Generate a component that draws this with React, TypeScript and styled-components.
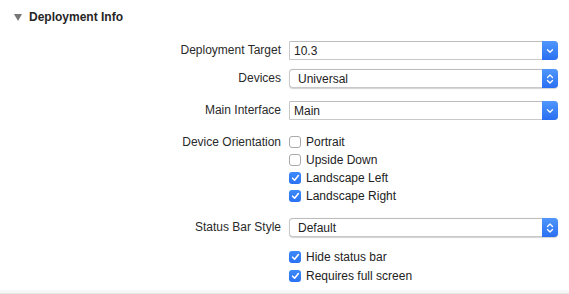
import React from "react";
import styled, { createGlobalStyle } from "styled-components";

const Global = createGlobalStyle`
  html, body { margin: 0; padding: 0; background: #ffffff; }
  body { font-family: "Liberation Sans", Arial, sans-serif; color: #262626; }
`;

const Page = styled.div`
  width: 569px;
  height: 294px;
  box-sizing: border-box;
  border-bottom: 1px solid #e6e6e6;
  position: relative;
  overflow: hidden;
  &::after {
    content: "";
    position: absolute;
    left: 0;
    right: 0;
    bottom: 0;
    height: 3px;
    background: #f7f7f7;
  }
`;

const Header = styled.div`
  height: 34px;
  display: flex;
  align-items: center;
  padding-left: 14px;
  gap: 7px;
`;

const Disclosure = styled.span`
  width: 0;
  height: 0;
  border-left: 4px solid transparent;
  border-right: 4px solid transparent;
  border-top: 7px solid #767676;
  margin-top: 1px;
`;

const Title = styled.span`
  font-weight: bold;
  font-size: 12px;
  color: #262626;
`;

const Form = styled.div`
  display: flex;
  flex-direction: column;
`;

const Row = styled.div<{ $top: number; $h?: number }>`
  display: grid;
  grid-template-columns: 281px 269px;
  column-gap: 8px;
  margin-top: ${(p) => p.$top}px;
  align-items: start;
`;

const Label = styled.div<{ $h?: number }>`
  text-align: right;
  font-size: 12px;
  line-height: ${(p) => p.$h ?? 19}px;
  color: #2a2a2a;
`;

const Field = styled.div<{ $rounded?: boolean }>`
  position: relative;
  height: 19px;
  box-sizing: border-box;
  border: 1px solid #c9c9c9;
  border-top-color: #bcbcbc;
  border-radius: ${(p) => (p.$rounded ? "4px" : "1px 4px 4px 1px")};
  background: #fff;
  box-shadow: ${(p) => (p.$rounded ? "0 0.5px 1px rgba(0,0,0,0.18)" : "none")};
  display: flex;
  align-items: center;
  font-size: 12px;
  padding-left: ${(p) => (p.$rounded ? "8px" : "4px")};
  color: #222;
`;

const Stepper = styled.div`
  position: absolute;
  top: -1px;
  right: -1px;
  bottom: -1px;
  width: 16px;
  border-radius: 0 4px 4px 0;
  background: linear-gradient(#4f97fc, #2a6ff2);
  display: flex;
  align-items: center;
  justify-content: center;
`;

const Checks = styled.div`
  display: flex;
  flex-direction: column;
`;

const CheckRow = styled.div<{ $h?: number }>`
  height: ${(p) => p.$h ?? 18}px;
  display: flex;
  align-items: center;
  gap: 5px;
  font-size: 12px;
  color: #222;
`;

const Box = styled.span<{ $on: boolean }>`
  width: 12px;
  height: 12px;
  box-sizing: border-box;
  border-radius: 3px;
  border: ${(p) => (p.$on ? "none" : "1px solid #a9a9a9")};
  background: ${(p) => (p.$on ? "linear-gradient(#3d8afa, #2a71f2)" : "#fff")};
  display: flex;
  align-items: center;
  justify-content: center;
`;

const Down = () => (
  <svg width="8" height="6" viewBox="0 0 8 6">
    <path d="M1.5 1.8 L4 4.2 L6.5 1.8" fill="none" stroke="#fff" strokeWidth="1.3" strokeLinecap="round" strokeLinejoin="round" />
  </svg>
);

const UpDown = () => (
  <svg width="8" height="12" viewBox="0 0 8 12">
    <path d="M1.5 4.5 L4 2 L6.5 4.5 M1.5 7.5 L4 10 L6.5 7.5" fill="none" stroke="#fff" strokeWidth="1.3" strokeLinecap="round" strokeLinejoin="round" />
  </svg>
);

const Tick = () => (
  <svg width="9" height="8" viewBox="0 0 9 8">
    <path d="M1.6 4.2 L3.6 6.2 L7.4 1.6" fill="none" stroke="#fff" strokeWidth="1.6" strokeLinecap="round" strokeLinejoin="round" />
  </svg>
);

const Check = ({ on, label, h }: { on: boolean; label: string; h?: number }) => (
  <CheckRow $h={h}>
    <Box $on={on}>{on && <Tick />}</Box>
    <span>{label}</span>
  </CheckRow>
);

export default function App() {
  return (
    <Page>
      <Global />
      <Header>
        <Disclosure />
        <Title>Deployment Info</Title>
      </Header>
      <Form>
        <Row $top={7}>
          <Label>Deployment Target</Label>
          <Field>
            10.3
            <Stepper>
              <Down />
            </Stepper>
          </Field>
        </Row>
        <Row $top={9}>
          <Label>Devices</Label>
          <Field $rounded>
            Universal
            <Stepper>
              <UpDown />
            </Stepper>
          </Field>
        </Row>
        <Row $top={13}>
          <Label>Main Interface</Label>
          <Field>
            Main
            <Stepper>
              <Down />
            </Stepper>
          </Field>
        </Row>
        <Row $top={13}>
          <Label $h={18}>Device Orientation</Label>
          <Checks>
            <Check on={false} label="Portrait" />
            <Check on={false} label="Upside Down" />
            <Check on label="Landscape Left" />
            <Check on label="Landscape Right" />
          </Checks>
        </Row>
        <Row $top={13}>
          <Label>Status Bar Style</Label>
          <Field $rounded>
            Default
            <Stepper>
              <UpDown />
            </Stepper>
          </Field>
        </Row>
        <Row $top={10}>
          <div />
          <Checks>
            <Check on label="Hide status bar" h={19} />
            <Check on label="Requires full screen" h={19} />
          </Checks>
        </Row>
      </Form>
    </Page>
  );
}
